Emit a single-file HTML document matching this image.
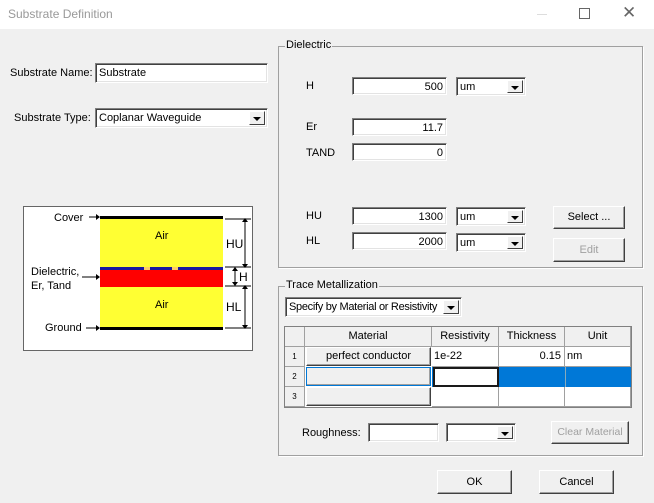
<!DOCTYPE html>
<html><head><style>
*{box-sizing:border-box;margin:0;padding:0}
body{width:654px;height:503px;background:#f0f0f0;font-family:"Liberation Sans",sans-serif;font-size:11px;color:#000;position:relative;overflow:hidden}
.a{position:absolute;white-space:nowrap}
.in{position:absolute;background:#fff;border:1px solid;border-color:#808080 #fff #fff #808080;box-shadow:inset 1px 1px 0 #404040,inset -1px -1px 0 #e3e3e3;padding:2px 3px;line-height:14px;white-space:nowrap;overflow:hidden}
.r{text-align:right}
.dd{position:absolute;right:2px;top:2px;width:16px;bottom:2px;background:#f0f0f0;border:1px solid;border-color:#fff #404040 #404040 #fff}
.dd:after{content:"";position:absolute;left:3px;top:5px;border:4px solid transparent;border-top:4px solid #000}
.btn{position:absolute;background:#f0f0f0;border:1px solid;border-color:#fff #404040 #404040 #fff;box-shadow:inset -1px -1px 0 #a0a0a0;text-align:center;white-space:nowrap}
.grp{position:absolute;border:1px solid #a0a0a0;box-shadow:1px 1px 0 #fff}
.gl{position:absolute;background:#f0f0f0;padding:0 1px;top:-8px;left:6px}
.cell{position:absolute;border-right:1px solid #a0a0a0;border-bottom:1px solid #a0a0a0;height:20px;line-height:19px;white-space:nowrap}
</style></head><body>
<div class="a" style="left:0;top:0;width:654px;height:29px;background:#fff"></div>
<div class="a" style="left:8px;top:7px;color:#999;font-size:12px">Substrate Definition</div>
<div class="a" style="left:537px;top:14px;width:10px;height:1px;background:#ddd"></div>
<div class="a" style="left:579px;top:8px;width:11px;height:11px;border:1px solid #666"></div>
<div class="a" style="left:622px;top:3px;font-size:17px;color:#666">✕</div>

<div class="a" style="left:10px;top:67px">Substrate Name:</div>
<div class="in" style="left:95px;top:63px;width:173px;height:20px">Substrate</div>
<div class="a" style="left:14px;top:112px">Substrate Type:</div>
<div class="in" style="left:95px;top:108px;width:173px;height:20px">Coplanar Waveguide<div class="dd"></div></div>

<div class="a" style="left:23px;top:206px;width:230px;height:145px;background:#fff;border:1px solid #666">
<svg width="230" height="145" style="position:absolute;left:-1px;top:-1px" font-family="Liberation Sans" font-size="11">
<rect x="77" y="12" width="123" height="50" fill="#ffff33"/>
<rect x="77" y="80" width="123" height="42" fill="#ffff33"/>
<rect x="77" y="10" width="123" height="3" fill="#000"/>
<rect x="77" y="121" width="123" height="3" fill="#000"/>
<rect x="77" y="61" width="123" height="4" fill="#1a1aa0"/>
<rect x="121" y="61" width="6" height="3" fill="#ffcc66"/>
<rect x="149" y="61" width="6" height="3" fill="#ffcc66"/>
<rect x="77" y="64" width="123" height="17" fill="#ff0000"/>
<text x="132" y="33">Air</text><text x="132" y="102">Air</text>
<text x="31" y="15">Cover</text><text x="8" y="69">Dielectric,</text><text x="8" y="83">Er, Tand</text><text x="22" y="125">Ground</text>
<g stroke="#000" fill="none"><path d="M66 11H74M63 122H74"/><path d="M59 71H74"/>
<path d="M202 13H228M202 61H228M202 80H228M202 122H228M222 13V61M222 80V122M212 62V79"/></g>
<g fill="#000"><path d="M73 8l0 6 4-3zM73 68l0 6 4-3zM73 119l0 6 4-3zM219 16h6l-3 -4zM219 58h6l-3 4zM219 83h6l-3 -4zM219 119h6l-3 4zM209 65h6l-3 -4zM209 76h6l-3 4z"/></g>
<text x="203" y="42" font-size="12">HU</text><text x="216" y="75" font-size="12">H</text><text x="203" y="105" font-size="12">HL</text>
</svg></div>

<div class="grp" style="left:278px;top:46px;width:365px;height:222px"><div class="gl">Dielectric</div></div>
<div class="a" style="left:306px;top:80px">H</div>
<div class="in r" style="left:352px;top:77px;width:95px;height:18px">500</div>
<div class="in" style="left:456px;top:77px;width:70px;height:19px">um<div class="dd"></div></div>
<div class="a" style="left:306px;top:121px">Er</div>
<div class="in r" style="left:352px;top:118px;width:95px;height:18px">11.7</div>
<div class="a" style="left:306px;top:147px">TAND</div>
<div class="in r" style="left:352px;top:143px;width:95px;height:18px">0</div>
<div class="a" style="left:306px;top:210px">HU</div>
<div class="in r" style="left:352px;top:207px;width:95px;height:18px">1300</div>
<div class="in" style="left:456px;top:207px;width:70px;height:19px">um<div class="dd"></div></div>
<div class="a" style="left:306px;top:235px">HL</div>
<div class="in r" style="left:352px;top:232px;width:95px;height:18px">2000</div>
<div class="in" style="left:456px;top:233px;width:70px;height:19px">um<div class="dd"></div></div>
<div class="btn" style="left:553px;top:206px;width:72px;height:23px;line-height:21px">Select ...</div>
<div class="btn" style="left:553px;top:238px;width:72px;height:24px;line-height:22px;color:#a0a0a0">Edit</div>

<div class="grp" style="left:278px;top:286px;width:365px;height:170px"><div class="gl">Trace Metallization</div></div>
<div class="in" style="left:285px;top:297px;width:177px;height:20px;padding-left:3px;letter-spacing:-0.3px">Specify by Material or Resistivity<div class="dd"></div></div>

<div class="a" style="left:284px;top:326px;width:348px;height:82px;background:#fff;border:1px solid #808080"></div>
<div class="cell" style="left:285px;top:327px;width:20px;background:#f0f0f0"></div>
<div class="cell" style="left:305px;top:327px;width:127px;background:#f0f0f0;text-align:center">Material</div>
<div class="cell" style="left:432px;top:327px;width:67px;background:#f0f0f0;text-align:center">Resistivity</div>
<div class="cell" style="left:499px;top:327px;width:66px;background:#f0f0f0;text-align:center">Thickness</div>
<div class="cell" style="left:565px;top:327px;width:66px;background:#f0f0f0;text-align:center">Unit</div>
<div class="cell" style="left:285px;top:347px;width:20px;background:#f0f0f0;font-size:8px;text-align:center">1</div>
<div class="cell" style="left:285px;top:367px;width:20px;background:#f0f0f0;font-size:8px;text-align:center">2</div>
<div class="cell" style="left:285px;top:387px;width:20px;background:#f0f0f0;font-size:8px;text-align:center">3</div>
<div class="btn" style="left:306px;top:347px;width:125px;height:19px;line-height:17px">perfect conductor</div>
<div class="btn" style="left:306px;top:367px;width:125px;height:19px;border:1px solid #0078d7"></div>
<div class="btn" style="left:306px;top:387px;width:125px;height:19px"></div>
<div class="cell" style="left:432px;top:347px;width:67px;padding-left:2px">1e-22</div>
<div class="cell" style="left:499px;top:347px;width:66px;text-align:right;padding-right:3px">0.15</div>
<div class="cell" style="left:565px;top:347px;width:66px;padding-left:2px">nm</div>
<div class="a" style="left:432px;top:367px;width:199px;height:20px;background:#0078d7"></div>
<div class="a" style="left:433px;top:367px;width:66px;height:20px;background:#fff;border:2px solid #1a1a1a"></div>
<div class="a" style="left:565px;top:367px;width:1px;height:20px;background:#8ab"></div>
<div class="cell" style="left:432px;top:387px;width:67px"></div>
<div class="cell" style="left:499px;top:387px;width:66px"></div>
<div class="cell" style="left:565px;top:387px;width:66px"></div>

<div class="a" style="left:302px;top:427px">Roughness:</div>
<div class="in" style="left:368px;top:423px;width:71px;height:19px"></div>
<div class="in" style="left:446px;top:423px;width:70px;height:19px"><div class="dd"></div></div>
<div class="btn" style="left:551px;top:421px;width:78px;height:23px;line-height:21px;color:#a0a0a0;font-size:10.5px">Clear Material</div>

<div class="btn" style="left:437px;top:470px;width:75px;height:24px;line-height:22px">OK</div>
<div class="btn" style="left:539px;top:470px;width:75px;height:24px;line-height:22px">Cancel</div>
</body></html>
